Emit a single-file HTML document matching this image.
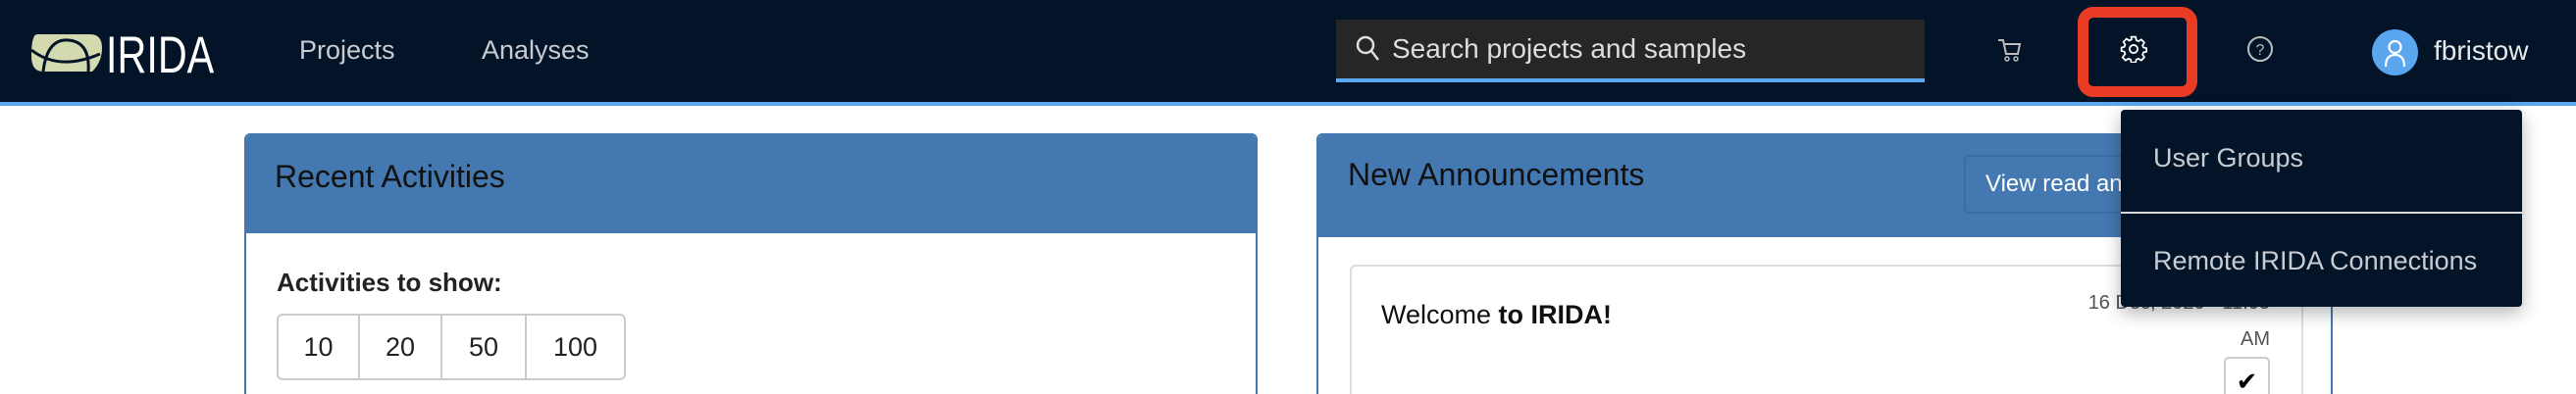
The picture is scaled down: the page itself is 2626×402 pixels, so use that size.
<!DOCTYPE html>
<html style="width:2626px;height:402px;overflow:hidden"><head><meta charset="utf-8"><style>
*{box-sizing:border-box;margin:0;padding:0}
body{width:2626px;height:402px;overflow:hidden;background:#fff;font-family:"Liberation Sans",sans-serif;position:relative}
.nav{position:absolute;left:0;top:0;width:2626px;height:104px;background:#041428}
.line{position:absolute;left:0;top:104px;width:2626px;height:4px;background:#5aa7f0}
.a{position:absolute;white-space:nowrap}
.panel{position:absolute;top:136px;border:2px solid #4478b0;border-bottom:none;border-radius:6px 6px 0 0;height:266px;background:#fff;overflow:hidden}
.ph{background:#4478b0;position:absolute;left:0;top:0;right:0}
</style></head><body>
<div class="nav"></div><div class="line"></div>
<svg class="a" style="left:30px;top:33px" width="76" height="42" viewBox="0 0 76 42">
<path d="M8 2 H62 Q74 2 74 16 Q74 30 64 40 H14 Q2 40 2 24 Q2 2 8 2Z" fill="#d3dab0"/>
<path d="M2 18 Q30 40 72 22" stroke="#041428" stroke-width="3" fill="none"/>
<path d="M14 40 Q18 6 40 8 Q62 10 60 40" stroke="#041428" stroke-width="3" fill="none"/>
</svg>
<div class="a" style="left:108px;top:26px;font-size:53px;color:#fff;transform:scaleX(0.78);transform-origin:left top">IRIDA</div>
<div class="a" style="left:305px;top:36px;font-size:27px;color:#c8ccd2">Projects</div>
<div class="a" style="left:491px;top:36px;font-size:27px;color:#c8ccd2">Analyses</div>
<div class="a" style="left:1362px;top:20px;width:600px;height:60px;background:#262626"></div>
<div class="a" style="left:1362px;top:80px;width:600px;height:4px;background:#5aa7f0"></div>
<svg class="a" style="left:1382px;top:36px" width="26" height="28" viewBox="0 0 26 28"><circle cx="10" cy="10" r="8" stroke="#ddd" stroke-width="2.5" fill="none"/><path d="M16 16 L23 25" stroke="#ddd" stroke-width="2.5"/></svg>
<div class="a" style="left:1419px;top:34px;font-size:28px;color:#ddd">Search projects and samples</div>
<svg class="a" style="left:2034px;top:38px" width="28" height="26" viewBox="0 0 28 26"><path d="M3 3h5l3 14h12l2-10H10" stroke="#bbb" stroke-width="2" fill="none"/><circle cx="12" cy="22" r="2" stroke="#bbb" stroke-width="1.5" fill="none"/><circle cx="21" cy="22" r="2" stroke="#bbb" stroke-width="1.5" fill="none"/></svg>
<div class="a" style="left:2118px;top:7px;width:122px;height:92px;border:11px solid #ea3b24;border-radius:16px"></div>
<svg class="a" style="left:2161px;top:36px" width="28" height="28" viewBox="0 0 24 24"><path d="M10 2h4l.6 3 2 1 2.6-1.6 2.8 2.8L20.4 9.8l.8 2 2.8.6v3.2l-2.8.6-.8 2 1.6 2.6-2.8 2.8-2.6-1.6-2 .8-.6 2.8h-4l-.6-2.8-2-.8-2.6 1.6-2.8-2.8L4.4 17.6l-.8-2L1 15v-3.2l2.6-.6.8-2L2.8 6.6l2.8-2.8 2.6 1.6 2-1z" transform="scale(.95) translate(.5 -.5)" stroke="#fff" stroke-width="1.6" fill="none"/><circle cx="12" cy="12" r="3.5" stroke="#fff" stroke-width="1.6" fill="none"/></svg>
<svg class="a" style="left:2290px;top:36px" width="28" height="28" viewBox="0 0 28 28"><circle cx="14" cy="14" r="12" stroke="#bbb" stroke-width="2" fill="none"/><text x="14" y="20" font-size="16" fill="#bbb" text-anchor="middle" font-family="Liberation Sans">?</text></svg>
<div class="a" style="left:2418px;top:30px;width:47px;height:47px;border-radius:50%;background:#5aa7f0"></div>
<svg class="a" style="left:2428px;top:38px" width="27" height="32" viewBox="0 0 27 32"><circle cx="13.5" cy="10" r="6" stroke="#fff" stroke-width="2.2" fill="none"/><path d="M4 30 Q4 18 13.5 18 Q23 18 23 30" stroke="#fff" stroke-width="2.2" fill="none"/></svg>
<div class="a" style="left:2481px;top:36px;font-size:28px;color:#e6e8ea">fbristow</div>

<div class="panel" style="left:249px;width:1033px">
<div class="ph" style="height:100px"></div>
<div class="a" style="left:29px;top:24px;font-size:32px;color:#111">Recent Activities</div>
<div class="a" style="left:31px;top:135px;font-size:26px;font-weight:bold;color:#222">Activities to show:</div>
<div class="a" style="left:31px;top:182px;width:356px;height:68px;border:2px solid #ccc;border-radius:6px;display:flex;font-size:27px;color:#222">
<div style="width:83px;border-right:2px solid #ccc;text-align:center;line-height:64px">10</div>
<div style="width:84px;border-right:2px solid #ccc;text-align:center;line-height:64px">20</div>
<div style="width:86px;border-right:2px solid #ccc;text-align:center;line-height:64px">50</div>
<div style="flex:1;text-align:center;line-height:64px">100</div></div>
</div>

<div class="panel" style="left:1342px;width:1036px">
<div class="ph" style="height:104px"></div>
<div class="a" style="left:30px;top:22px;font-size:32px;color:#111">New Announcements</div>
<div class="a" style="left:658px;top:20px;width:320px;height:60px;border:2px solid #3a6ca3;border-radius:5px;font-size:24px;color:#fff;padding:14px 0 0 20px">View read and unread</div>
<div class="a" style="left:32px;top:132px;width:972px;height:134px;border:2px solid #ddd;border-bottom:none;border-radius:6px 6px 0 0"></div>
<div class="a" style="left:64px;top:168px;font-size:27px;color:#111">Welcome <b>to IRIDA!</b></div>
<div class="a" style="left:760px;top:160px;width:210px;text-align:right;font-size:20px;color:#555">16 Dec, 2020 - 11:05</div>
<div class="a" style="left:930px;top:197px;width:40px;text-align:right;font-size:20px;color:#555">AM</div>
<div class="a" style="left:923px;top:226px;width:47px;height:40px;border:2px solid #ccc;border-bottom:none;border-radius:5px 5px 0 0;font-size:26px;text-align:center;padding-top:8px;overflow:hidden">✔</div>
</div>

<div class="a" style="left:2162px;top:112px;width:409px;height:201px;background:#041428;border-radius:4px;box-shadow:0 6px 18px rgba(0,0,0,.3)">
<div class="a" style="left:33px;top:34px;font-size:27px;color:#c8ccd2">User Groups</div>
<div class="a" style="left:0;top:104px;width:409px;height:2px;background:#d8dadc"></div>
<div class="a" style="left:33px;top:139px;font-size:27px;color:#c8ccd2">Remote IRIDA Connections</div>
</div>
</body></html>
